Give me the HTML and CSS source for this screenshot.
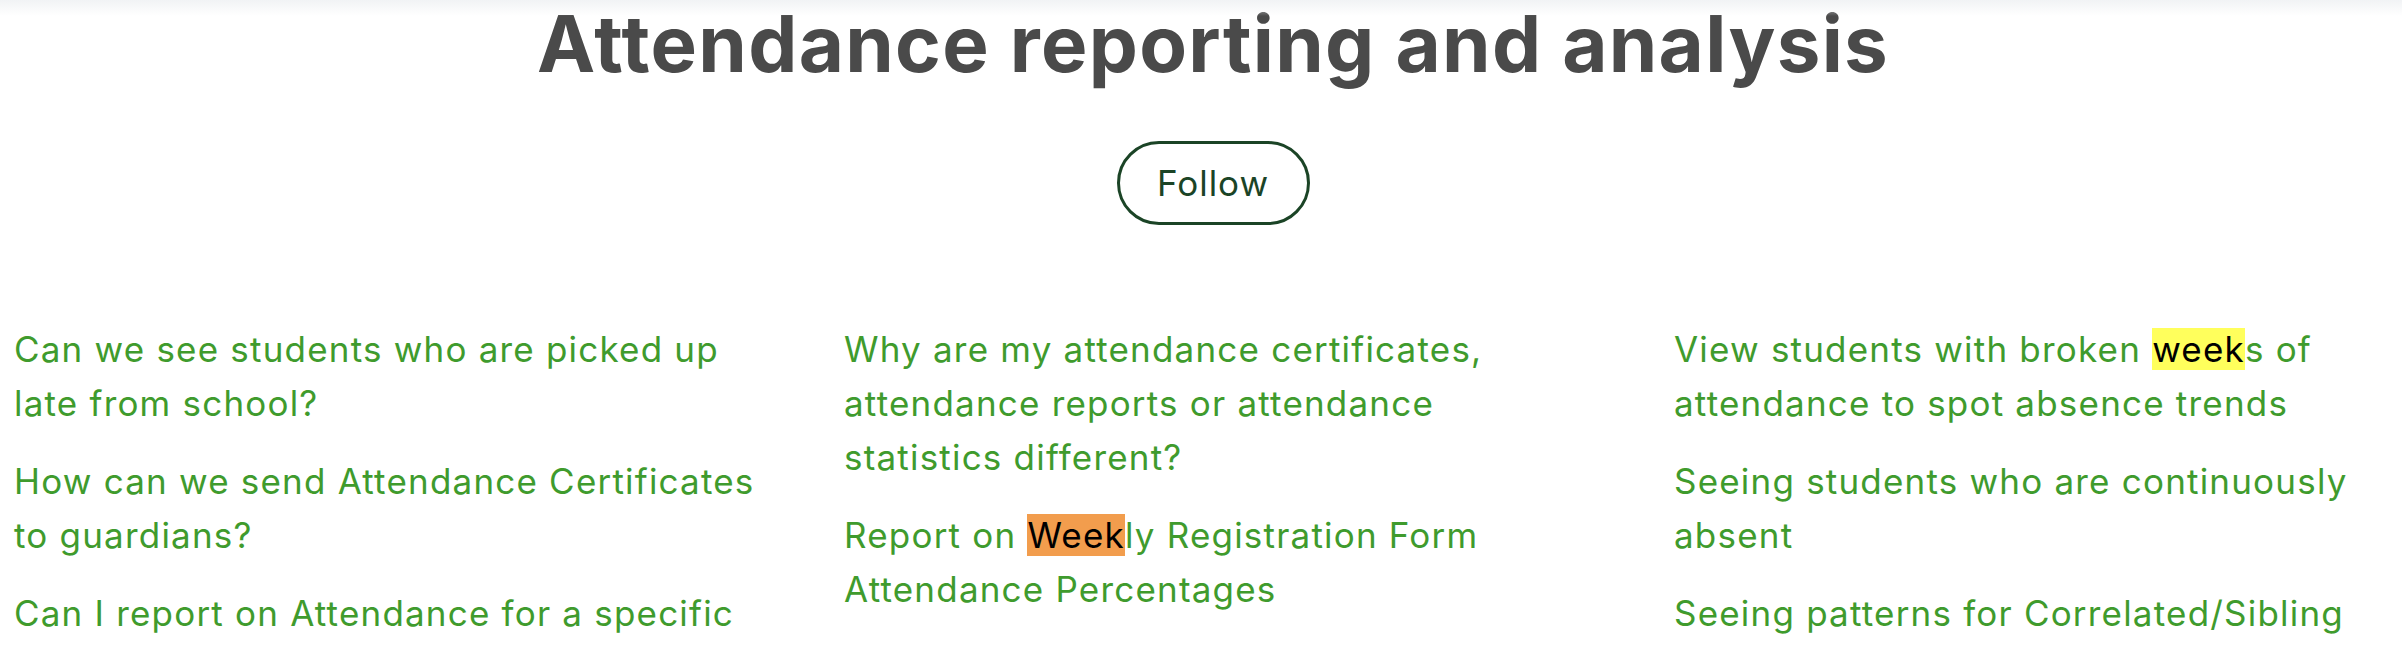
FILE: index.html
```html
<!DOCTYPE html>
<html lang="en">
<head>
<meta charset="utf-8">
<title>Attendance reporting and analysis</title>
<link rel="stylesheet" href="styles.css">
</head>
<body>
<div class="topshade"></div>
<header class="section-head">
  <h1 class="section-title">Attendance reporting and analysis</h1>
  <button class="follow-btn" type="button">Follow</button>
</header>
<section class="article-grid">
  <ul class="article-list">
    <li><a href="#">Can we see students who are picked up late from school?</a></li>
    <li><a href="#">How can we send Attendance Certificates to guardians?</a></li>
    <li><a href="#">Can I report on Attendance for a specific</a></li>
  </ul>
  <ul class="article-list">
    <li><a href="#">Why are my attendance certificates, attendance reports or attendance statistics different?</a></li>
    <li><a href="#">Report on <mark class="hl hl-orange">Week</mark>ly Registration Form Attendance Percentages</a></li>
  </ul>
  <ul class="article-list">
    <li><a href="#">View students with broken <mark class="hl hl-yellow">week</mark>s of attendance to spot absence trends</a></li>
    <li><a href="#">Seeing students who are continuously absent</a></li>
    <li><a href="#">Seeing patterns for Correlated/Sibling</a></li>
  </ul>
</section>
</body>
</html>
```
FILE: styles.css
```css
html, body {
  margin: 0;
  padding: 0;
  background: #ffffff;
  overflow: hidden;
}
body {
  width: 2402px;
  height: 648px;
  font-family: "Inter", "Open Sans", "Liberation Sans", sans-serif;
  position: relative;
}
.topshade {
  position: absolute;
  left: 0;
  top: 0;
  width: 100%;
  height: 16px;
  background: linear-gradient(#f1f3f5, rgba(255,255,255,0));
}
.section-head {
  display: flex;
  flex-direction: column;
  align-items: center;
  padding-left: 24px;
}
.section-title {
  margin: 0;
  font-size: 78px;
  line-height: 88px;
  font-weight: 700;
  color: #4a4a4a;
  letter-spacing: 1.3px;
}
.follow-btn {
  margin-top: 53px;
  width: 193px;
  height: 84px;
  border: 3px solid #1b4426;
  border-radius: 42px;
  background: #ffffff;
  color: #1b4426;
  font-family: inherit;
  font-size: 35px;
  letter-spacing: 1px;
  padding: 0;
}
.article-grid {
  display: grid;
  grid-template-columns: 745px 745px 1fr;
  column-gap: 85px;
  padding-left: 14px;
  margin-top: 97px;
}
.article-list {
  list-style: none;
  margin: 0;
  padding: 0;
  display: flex;
  flex-direction: column;
  gap: 24px;
}
.article-list a {
  color: #3f9b2d;
  text-decoration: none;
  font-size: 35px;
  line-height: 54px;
  letter-spacing: 1.2px;
}
.hl {
  color: #000000;
  padding: 0;
}
.hl-orange { background: #f29d4d; }
.hl-yellow { background: #ffff5c; }
```
